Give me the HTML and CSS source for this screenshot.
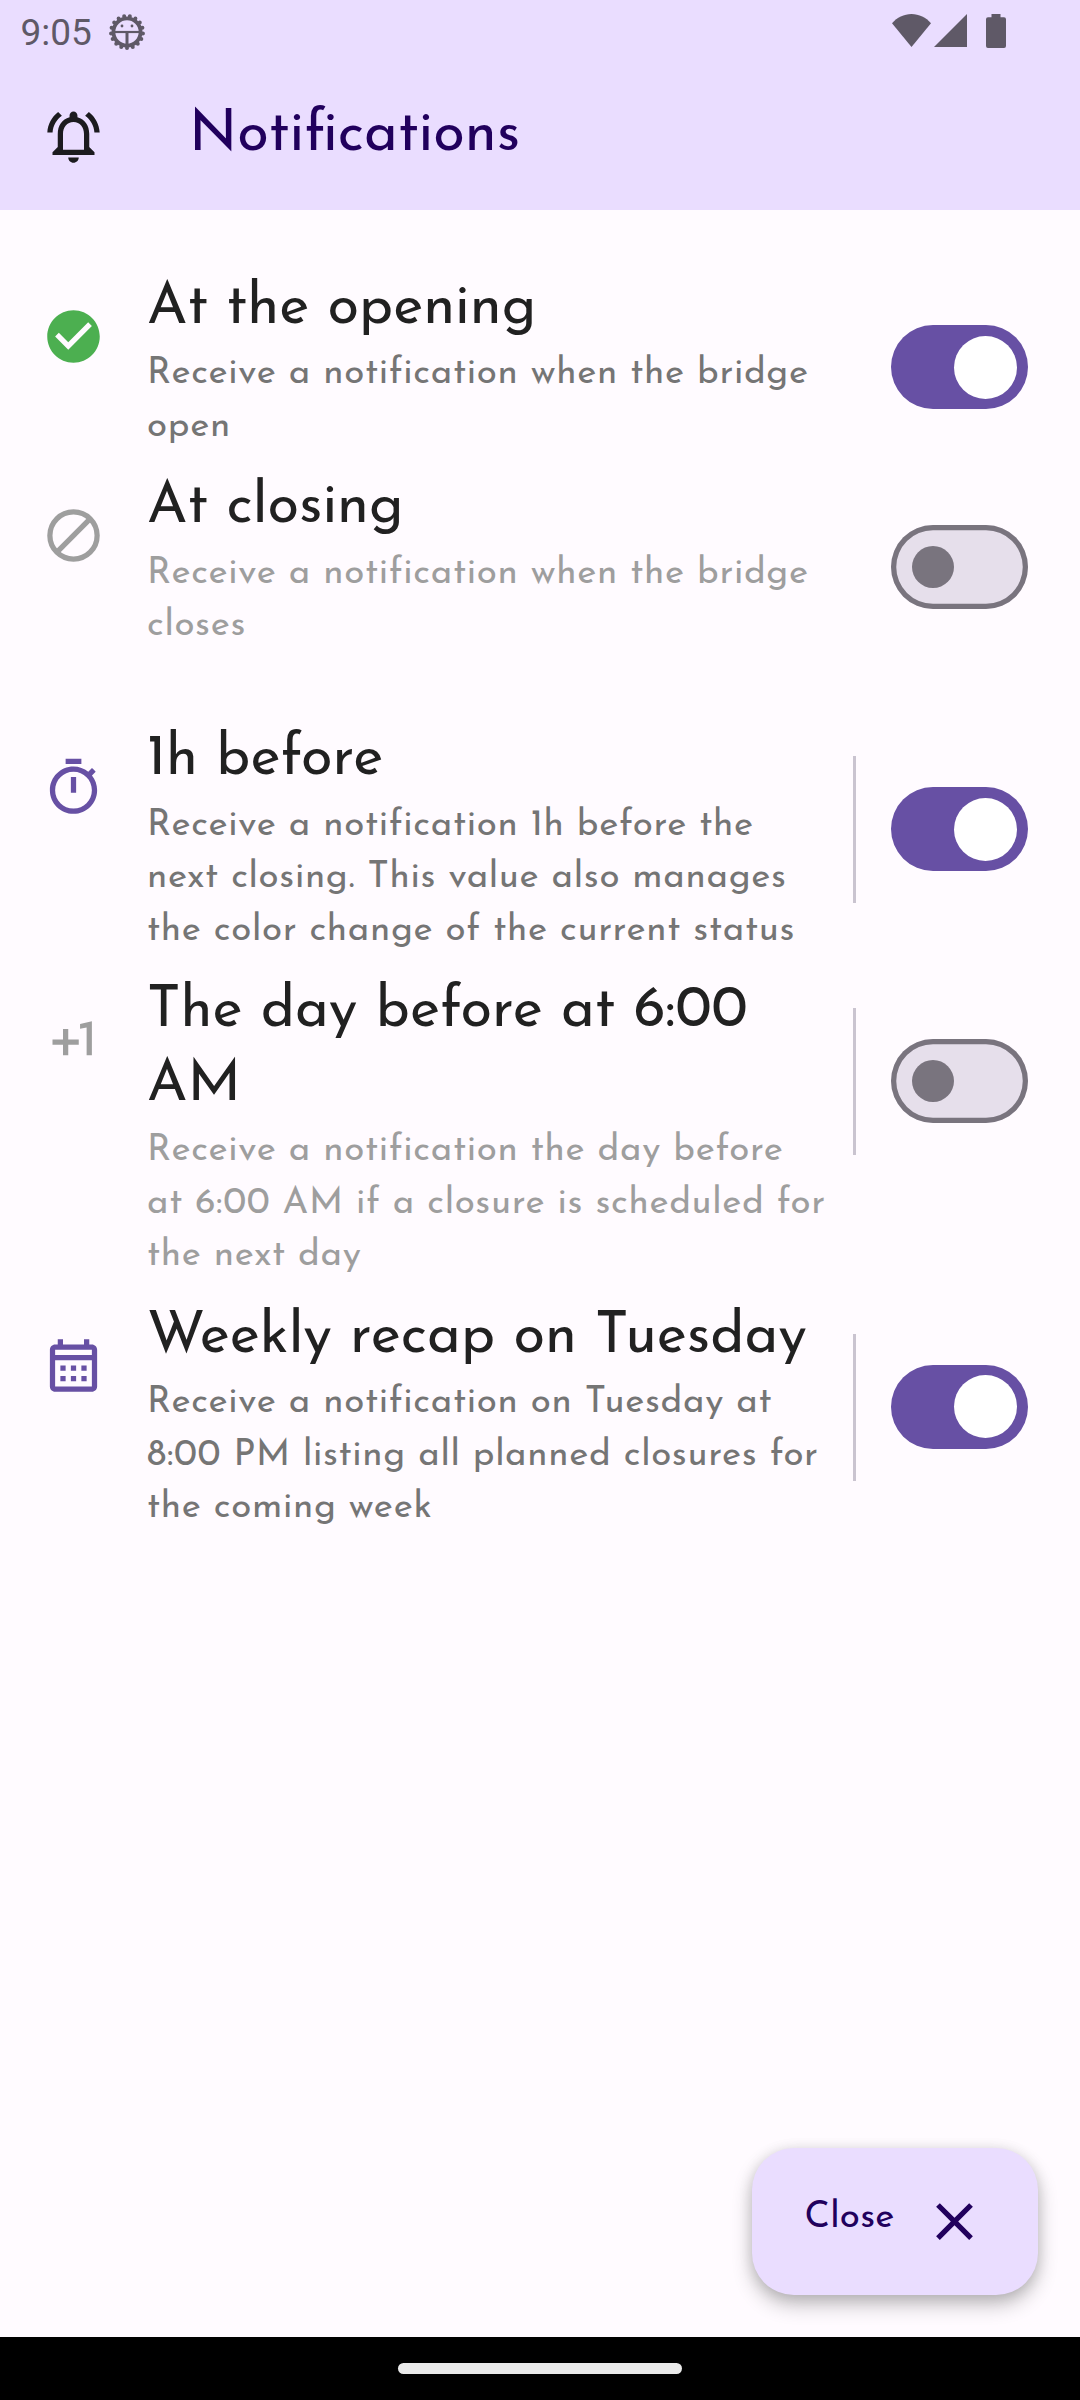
FILE: index.html
```html
<!DOCTYPE html>
<html lang="en">
<head>
<meta charset="utf-8">
<title>Notifications</title>
<link rel="stylesheet" href="styles.css">
</head>
<body>
<div class="screen">
  <header class="header">
    <div class="status">
      <span class="clock">9:05</span>
      <svg class="debug" viewBox="-20 -20 40 40" fill="none" stroke="currentColor">
        <circle r="13.600" stroke-width="3.800"/>
        <circle r="16" stroke-width="4" stroke-linecap="round" pathLength="34" stroke-dasharray="0 2" transform="rotate(90)"/>
        <path d="M-14 0H14" stroke-width="2.200"/>
        <path d="M0 0V14" stroke-width="3"/>
        <g fill="currentColor" stroke="none"><circle cx="-5" cy="-6" r="1.400"/><circle cx="5" cy="-6" r="1.400"/></g>
      </svg>
      <div class="signals">
        <svg class="wifi" viewBox="0 0 39 33"><path d="M19.5 33L0 9.2C5 3.5 12 0 19.5 0S34 3.500 39 9.200z"/></svg>
        <svg class="cell" viewBox="0 0 33 33"><path d="M33 0V33H0z"/></svg>
        <svg class="battery" viewBox="0 0 20 34"><path d="M5.500 0h9v3.300H18a2 2 0 0 1 2 2V32a2 2 0 0 1-2 2H2a2 2 0 0 1-2-2V5.300a2 2 0 0 1 2-2h3.500z"/></svg>
      </div>
    </div>
    <div class="appbar">
      <svg class="icon bell" viewBox="0 0 24 24"><path d="M12 22c1.100 0 2-.9 2-2h-4c0 1.100.89 2 2 2zm6-6v-5c0-3.070-1.630-5.640-4.500-6.320V4c0-.83-.67-1.500-1.500-1.500s-1.500.67-1.500 1.500v.68C7.640 5.360 6 7.920 6 11v5l-2 2v1h16v-1l-2-2zm-2 1H8v-6c0-2.480 1.510-4.500 4-4.500s4 2.020 4 4.500v6zM7.580 4.080L6.150 2.650C3.750 4.480 2.170 7.300 2.030 10.500h2c.15-2.650 1.510-4.970 3.550-6.420zm12.390 6.420h2c-.15-3.200-1.730-6.020-4.120-7.850l-1.420 1.430c2.020 1.450 3.390 3.770 3.540 6.420z"/></svg>
      <h1 class="title">Notifications</h1>
    </div>
  </header>

  <main class="list">
    <section class="row">
      <svg class="icon green" viewBox="0 0 24 24"><path d="M12 2C6.480 2 2 6.480 2 12s4.480 10 10 10 10-4.480 10-10S17.520 2 12 2zm-2 15l-5-5 1.410-1.410L10 14.170l7.590-7.590L19 8l-9 9z"/></svg>
      <div class="text">
        <h2>At the opening</h2>
        <p>Receive a notification when the bridge<br>open</p>
      </div>
      <div class="switch on"><i></i></div>
    </section>

    <section class="row off">
      <svg class="icon" viewBox="0 0 24 24"><circle cx="12" cy="12" r="9" fill="none" stroke="currentColor" stroke-width="2"/><path d="M5.700 18.300L18.300 5.700" stroke="currentColor" stroke-width="2"/></svg>
      <div class="text">
        <h2>At closing</h2>
        <p>Receive a notification when the bridge<br>closes</p>
      </div>
      <div class="switch"><i></i></div>
    </section>

    <section class="row timed first">
      <svg class="icon" viewBox="0 0 24 24"><path d="M15 1H9v2h6V1zm-4 13h2V8h-2v6zm8.030-6.610l1.420-1.420c-.43-.51-.9-.99-1.410-1.410l-1.420 1.420C16.070 4.740 14.120 4 12 4c-4.970 0-9 4.030-9 9s4.020 9 9 9 9-4.030 9-9c0-2.120-.74-4.070-1.970-5.610zM12 20c-3.870 0-7-3.130-7-7s3.130-7 7-7 7 3.130 7 7-3.130 7-7 7z"/></svg>
      <div class="text">
        <h2>1h before</h2>
        <p>Receive a notification 1h before the<br>next closing. This value also manages<br>the color change of the current status</p>
      </div>
      <div class="divider"></div>
      <div class="switch on"><i></i></div>
    </section>

    <section class="row timed off">
      <svg class="icon" viewBox="0 0 24 24"><path d="M10 8H8v4H4v2h4v4h2v-4h4v-2h-4zm4.500-1.920V7.900l2.500-.5V18h2V5z"/></svg>
      <div class="text">
        <h2>The day before at 6:00<br>AM</h2>
        <p>Receive a notification the day before<br>at 6:00 AM if a closure is scheduled for<br>the next day</p>
      </div>
      <div class="divider"></div>
      <div class="switch"><i></i></div>
    </section>

    <section class="row timed">
      <svg class="icon" viewBox="0 0 24 24"><path d="M19 4h-1V2h-2v2H8V2H6v2H5c-1.110 0-1.990.9-1.990 2L3 20c0 1.100.89 2 2 2h14c1.100 0 2-.9 2-2V6c0-1.100-.9-2-2-2zm0 16H5V10h14v10zm0-12H5V6h14v2zM9 14H7v-2h2v2zm4 0h-2v-2h2v2zm4 0h-2v-2h2v2zm-8 4H7v-2h2v2zm4 0h-2v-2h2v2zm4 0h-2v-2h2v2z"/></svg>
      <div class="text">
        <h2>Weekly recap on Tuesday</h2>
        <p>Receive a notification on Tuesday at<br>8:00 PM listing all planned closures for<br>the coming week</p>
      </div>
      <div class="divider"></div>
      <div class="switch on"><i></i></div>
    </section>
  </main>

  <button class="fab"><span>Close</span><svg class="icon" viewBox="0 0 24 24"><path d="M19 6.410L17.590 5 12 10.590 6.410 5 5 6.410 10.590 12 5 17.590 6.410 19 12 13.410 17.590 19 19 17.590 13.410 12z"/></svg></button>
  <nav class="navbar"><div class="pill"></div></nav>
</div>
</body>
</html>
```
FILE: styles.css
```css
* { box-sizing: border-box; }
body { margin: 0; font-family: "Josefin Sans", Lato, sans-serif; }
h1, h2, p { margin: 0; font-weight: 400; }
svg { display: block; fill: currentColor; flex: none; }

.screen {
  position: relative;
  width: 1080px;
  height: 2400px;
  display: flex;
  flex-direction: column;
  background: #fffbff;
  overflow: hidden;
}

/* Status bar and app bar */
.header { height: 210px; background: #eaddff; flex: none; }
.status { height: 63px; display: flex; align-items: flex-start; padding-left: 20.500px; color: #5f5967; }
.clock { font: 37px/43px Roboto, sans-serif; width: 86.500px; padding-top: 11px; }
.debug { width: 40px; height: 40px; margin-top: 12px; fill: none; }
.signals { display: flex; margin: 14px 74px 0 auto; }
.wifi { width: 39px; height: 33px; margin-right: 3px; }
.cell { width: 33px; height: 33px; margin-right: 19px; }
.battery { width: 20px; height: 34px; }

.appbar { height: 147px; display: flex; align-items: flex-start; padding-left: 42px; }
.icon { width: 63px; height: 63px; }
.bell { margin-top: 42px; color: #1c1b1f; }
.title {
  margin: 35.800px 0 0 84px;
  font-size: 57.750px;
  line-height: 73.500px;
  color: #21005d;
}

/* Settings list */
.list { flex: 1; padding: 42px 52.500px 0 42px; }
.row { display: flex; align-items: flex-start; color: #6750a4; }
.row .icon { margin-top: 52.500px; }
.row.first { margin-top: 52.500px; }
.row.off { color: #9e9e9e; }
.row .green { color: #4caf50; }

.text { flex: 1; padding: 19.500px 0 0 42px; white-space: nowrap; }
.text h2 { font-size: 57.750px; line-height: 73.500px; color: #212121; }
.text p {
  margin: 3.200px 0 -1.700px;
  font-size: 36.750px;
  line-height: 52.500px;
  letter-spacing: .656px;
  color: #757575;
}
.off .text p { color: #9e9e9e; }

.divider { width: 2.600px; height: 147px; margin: 52.500px 35px 0 0; background: #cac4d0; }

.switch {
  width: 136.500px;
  height: 84px;
  margin-top: 73.200px;
  display: flex;
  align-items: center;
  box-shadow: inset 0 0 0 5.250px #79747e;
  border-radius: 42px;
  background: #e6dfeb;
  padding-left: 21px;
}
.switch i { width: 42px; height: 42px; border-radius: 50%; background: #79747e; }
.switch.on { box-shadow: none; background: #6750a4; padding: 0 10.500px 0 0; justify-content: flex-end; }
.switch.on i { width: 63px; height: 63px; background: #fff; }
.timed .switch { margin-top: 83.700px; }

/* Floating close button */
.fab {
  position: absolute;
  right: 42px;
  bottom: 105px;
  width: 286px;
  height: 147px;
  display: flex;
  align-items: center;
  border: 0;
  border-radius: 42px;
  padding: 0 52.500px;
  background: #eaddff;
  color: #21005d;
  font: 36.750px/52px "Josefin Sans", Lato, sans-serif;
  letter-spacing: .260px;
  box-shadow: 0 10px 20px rgba(0, 0, 0, .24), 0 2px 14px rgba(0, 0, 0, .12);
}
.fab span { margin-bottom: 8px; width: 118px; text-align: left; }

.navbar { height: 63px; flex: none; background: #000; display: flex; justify-content: center; padding-top: 26px; }
.pill { width: 284px; height: 11px; border-radius: 6px; background: #eaeaea; }
```
